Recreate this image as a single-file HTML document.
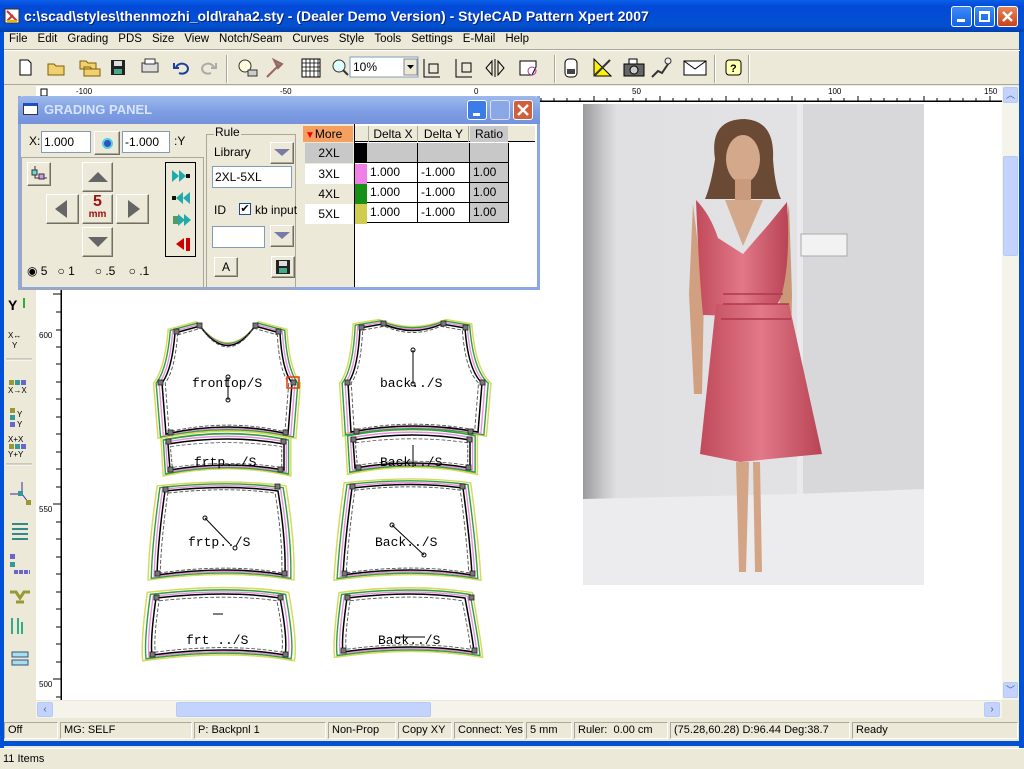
<!DOCTYPE html>
<html><head><meta charset="utf-8"><style>
*{box-sizing:border-box;margin:0;padding:0}
body{width:1024px;height:768px;overflow:hidden;background:#ECE9D8;font-family:Tahoma,"Liberation Sans",sans-serif;font-size:11px;position:relative;color:#000}
.abs{position:absolute}
#title{left:0;top:0;width:1024px;height:32px;background:linear-gradient(#0A5FE8,#0349D8 20%,#0350D0 80%,#0040B0);color:#fff;font-weight:bold;font-size:14px;line-height:32px;padding-left:24px;font-family:"Liberation Sans",sans-serif;text-shadow:1px 1px #0a1e7a}
.wb{position:absolute;top:6px;width:21px;height:21px;border:1px solid #fff;border-radius:3px;background:linear-gradient(#3C8CF8,#1560E8)}
#menu{left:4px;top:32px;width:1016px;height:16px;}
#menu span{margin:0 5px;font-size:11.5px;line-height:14px}
#tb{left:4px;top:50px;width:1016px;height:34px;border-top:1px solid #fff;}
.sep{position:absolute;top:4px;width:2px;height:28px;border-left:1px solid #aca899;border-right:1px solid #fff}
#lt{left:4px;top:86px;width:30px;height:632px;background:#ECE9D8}
#frameL{left:0;top:32px;width:4px;height:716px;background:#0050D8}
#frameR{left:1019px;top:32px;width:5px;height:716px;background:#0050D8}
#frameB{left:0;top:741px;width:1024px;height:5px;background:#0050D8}
#vr{left:36px;top:102px;width:26px;height:598px;background:#fff;border-right:1px solid #000}
#hr{left:36px;top:86px;width:966px;height:16px;background:#fff;border-bottom:1px solid #000}
#canvas{left:62px;top:102px;width:940px;height:598px;background:#fff}
#vs{left:1002px;top:86px;width:17px;height:614px;background:#F5F4EA}
#hs{left:36px;top:701px;width:966px;height:17px;background:#F5F4EA}
#status{left:4px;top:720px;width:1015px;height:20px;}
#status div{position:absolute;top:2px;height:17px;border:1px solid #aca899;border-color:#aca899 #fff #fff #aca899;font-size:11px;line-height:15px;padding-left:3px;font-family:"Liberation Sans Narrow","Liberation Sans",sans-serif}
#st2{left:0;top:748px;width:1024px;height:20px;font-size:11px;line-height:20px;padding-left:3px;border-top:1px solid #fff}
#gp{left:18px;top:96px;width:522px;height:194px;background:#ECE9D8;border:3px solid #8DA7E6;border-top:none}
#gpt{left:18px;top:96px;width:522px;height:28px;background:linear-gradient(#9DB9EB,#7C9CE4 60%,#7593DB);border-radius:6px 6px 0 0;color:#D8E4F8;font-weight:bold;font-size:13px;line-height:28px;padding-left:26px;font-family:"Liberation Sans",sans-serif}
.btn{position:absolute;background:#ECE9D8;border:1px solid;border-color:#fff #716F64 #716F64 #fff;box-shadow:inset -1px -1px #ACA899}
.inp{position:absolute;background:#fff;border:1px solid #7F9DB9;font-size:12px;line-height:20px;padding-left:2px}
.cell{position:absolute;height:20px;border-right:1px solid #000;border-bottom:1px solid #000;font-size:12px;line-height:18px;padding-left:3px}
</style></head><body>
<div id="title" class="abs">c:\scad\styles\thenmozhi_old\raha2.sty - (Dealer Demo Version) - StyleCAD Pattern Xpert 2007</div>
<svg class="abs" style="left:4px;top:8px" width="17" height="16"><rect x="1" y="1" width="14" height="14" fill="#fff" stroke="#333"/><path d="M3 3l10 10M3 13l6-6" stroke="#c33" stroke-width="2"/><path d="M3 13h10" stroke="#e8b800" stroke-width="2"/></svg>
<div class="wb" style="left:951px"><div style="position:absolute;left:5px;top:12px;width:8px;height:3px;background:#fff"></div></div>
<div class="wb" style="left:974px"><div style="position:absolute;left:4px;top:4px;width:11px;height:11px;border:2px solid #fff;border-top-width:3px"></div></div>
<div class="wb" style="left:997px;background:linear-gradient(#E8865C,#C8421A)"><svg width="19" height="19"><path d="M5 5l9 9M14 5l-9 9" stroke="#fff" stroke-width="2.4"/></svg></div>
<div id="frameL" class="abs"></div><div id="frameR" class="abs"></div><div id="frameB" class="abs"></div>
<div id="menu" class="abs"><span style="margin-left:5px">File</span><span>Edit</span><span>Grading</span><span>PDS</span><span>Size</span><span>View</span><span>Notch/Seam</span><span>Curves</span><span>Style</span><span>Tools</span><span>Settings</span><span>E-Mail</span><span>Help</span></div>
<div class="abs" style="left:4px;top:49px;width:1015px;height:1px;background:#aca899"></div>
<div id="tb" class="abs">
<svg width="760" height="34" style="position:absolute;left:0;top:0">
<path d="M16 9h8l3 3v12h-11z" fill="#fff" stroke="#000"/>
<path d="M44 13h6l2 2h8v9h-16z" fill="#F0D070" stroke="#806000"/>
<path d="M76 10h6l2 2h8v6h-16zM80 16h6l2 2h8v7h-16z" fill="#F0D070" stroke="#806000"/>
<rect x="107" y="9" width="14" height="15" fill="#222"/><rect x="110" y="10" width="8" height="5" fill="#ddd"/><rect x="110" y="18" width="8" height="5" fill="#4a8"/>
<rect x="138" y="12" width="16" height="9" fill="#ddd" stroke="#333"/><rect x="141" y="8" width="10" height="5" fill="#fff" stroke="#333"/>
<path d="M172 17a6 5 0 1 1 3 5M170 12v5h5" fill="none" stroke="#1A3FA0" stroke-width="2"/>
<path d="M210 17a6 5 0 1 0 -3 5M212 12v5h-5" fill="none" stroke="#aaa" stroke-width="2"/>
<circle cx="241" cy="15" r="6" fill="#ffd" stroke="#333"/><rect x="244" y="19" width="9" height="6" fill="#ccc" stroke="#333"/>
<path d="M263 26l12-12M270 9l8 4-4 4z" stroke="#966" stroke-width="2" fill="#888"/>
<rect x="298" y="8" width="18" height="18" fill="#fff" stroke="#000"/><path d="M298 12h18M298 16h18M298 20h18M302 8v18M306 8v18M310 8v18M314 8v18" stroke="#000" stroke-width="0.8"/>
<circle cx="335" cy="15" r="6" fill="#dff" stroke="#333"/><path d="M339 19l5 5" stroke="#333" stroke-width="2"/>
<rect x="346" y="6" width="68" height="20" fill="#fff" stroke="#7F9DB9"/><text x="349" y="20" font-size="12" font-family="Liberation Sans">10%</text>
<rect x="400" y="8" width="13" height="16" fill="#ECE9D8" stroke="#888"/><path d="M403 14h7l-3.5 4z" fill="#000"/>
<path d="M420 8v18h16M425 13h9v9h-9z" fill="none" stroke="#000"/>
<path d="M452 8v18h16M458 12h9v9h-9z" fill="none" stroke="#000"/>
<path d="M488 10l-6 7 6 7zM494 10l6 7-6 7zM491 8v18" fill="none" stroke="#000"/>
<path d="M516 10h16v6l-4 8h-12z" fill="#fff" stroke="#000"/><circle cx="528" cy="20" r="4" fill="none" stroke="#a3a"/>
<rect x="561" y="8" width="12" height="18" rx="4" fill="#fff" stroke="#000"/><rect x="563" y="18" width="8" height="5" fill="#444"/>
<path d="M590 8l17 17h-17z" fill="#FFF200" stroke="#000"/><path d="M590 25l16-16" stroke="#333" stroke-width="2"/>
<rect x="620" y="13" width="20" height="12" fill="#666" stroke="#000"/><circle cx="630" cy="19" r="4" fill="#ccc" stroke="#000"/><rect x="625" y="8" width="8" height="5" fill="#fff" stroke="#000"/>
<path d="M648 26l6-6 4 2 8-12" stroke="#333" stroke-width="2" fill="none"/><circle cx="664" cy="10" r="3" fill="#eee" stroke="#333"/>
<rect x="680" y="10" width="22" height="14" fill="#fff" stroke="#000"/><path d="M680 10l11 8 11-8" fill="none" stroke="#000"/>
<rect x="722" y="9" width="15" height="15" rx="3" fill="#FFFFB0" stroke="#000"/><text x="726" y="21" font-size="11" font-weight="bold" font-family="Liberation Sans">?</text>
</svg>
<div class="sep" style="left:222px"></div><div class="sep" style="left:550px"></div><div class="sep" style="left:710px"></div><div class="sep" style="left:744px"></div>
</div>
<div class="abs" style="left:4px;top:84px;width:1015px;height:1px;background:#aca899"></div>
<div id="lt" class="abs">
<svg width="30" height="630"><g transform="translate(0,38)">
<g font-family="Liberation Sans" font-size="8" fill="#000">
<text x="4" y="186" font-size="14" font-weight="bold">Y</text><path d="M20 174v10" stroke="#3a3" stroke-width="2"/>
<text x="4" y="214">X↔</text><text x="8" y="224">Y</text>
<rect x="5" y="256" width="5" height="5" fill="#993"/><rect x="11" y="256" width="5" height="5" fill="#399"/><rect x="17" y="256" width="5" height="5" fill="#66c"/><text x="4" y="269">X→X</text>
<rect x="6" y="284" width="5" height="5" fill="#993"/><rect x="6" y="291" width="5" height="5" fill="#399"/><rect x="6" y="298" width="5" height="5" fill="#66c"/><text x="13" y="293">Y</text><text x="13" y="303">Y</text>
<text x="4" y="318">X+X</text><rect x="5" y="320" width="5" height="5" fill="#993"/><rect x="11" y="320" width="5" height="5" fill="#399"/><rect x="17" y="320" width="5" height="5" fill="#66c"/><text x="4" y="333">Y+Y</text>
<path d="M6 370h12v-12M18 370l6 8" stroke="#339" fill="none"/><rect x="14" y="367" width="5" height="5" fill="#399"/><rect x="22" y="376" width="5" height="5" fill="#993"/>
<path d="M8 400h16M8 405h16M8 410h16M8 415h16" stroke="#388" stroke-width="2"/>
<rect x="6" y="430" width="5" height="5" fill="#66c"/><rect x="6" y="438" width="5" height="5" fill="#399"/><path d="M10 448h16" stroke="#66c" stroke-width="4" stroke-dasharray="4 1"/>
<path d="M6 468h6l4 6 4-6h6M12 478h8" stroke="#993" stroke-width="3" fill="none"/>
<path d="M8 494v16M14 494v16M18 498v12" stroke="#3a8" stroke-width="2"/>
<path d="M8 528h16v5h-16zM8 536h16v5h-16z" fill="#ade" stroke="#357"/>
</g>
<path d="M2 235h26M2 340h26" stroke="#aca899"/>
<path d="M2 236h26M2 341h26" stroke="#fff"/>
</g></svg>
</div>
<div id="hr" class="abs"><svg width="966" height="16">
<path d="M0 15h966" stroke="#000"/>
<path d="M30 15v-5M43 15v-3M56 15v-3M69 15v-3M83 15v-3M96 15v-5M109 15v-3M122 15v-3M135 15v-3M148 15v-3M162 15v-5M175 15v-3M188 15v-3M201 15v-3M214 15v-3M228 15v-5M241 15v-3M254 15v-3M267 15v-3M280 15v-3M294 15v-5M307 15v-3M320 15v-3M333 15v-3M346 15v-3M360 15v-5M373 15v-3M386 15v-3M399 15v-3M412 15v-3M426 15v-5M439 15v-3M452 15v-3M465 15v-3M478 15v-3M492 15v-5M505 15v-3M518 15v-3M531 15v-3M544 15v-3M558 15v-5M571 15v-3M584 15v-3M597 15v-3M610 15v-3M624 15v-5M637 15v-3M650 15v-3M663 15v-3M676 15v-3M690 15v-5M703 15v-3M716 15v-3M729 15v-3M742 15v-3M756 15v-5M769 15v-3M782 15v-3M795 15v-3M808 15v-3M822 15v-5M835 15v-3M848 15v-3M861 15v-3M874 15v-3M888 15v-5M901 15v-3M914 15v-3M927 15v-3M940 15v-3M954 15v-5" stroke="#000"/>
<g font-size="8" font-family="Liberation Sans"><text x="40" y="8">-100</text><text x="244" y="8">-50</text><text x="438" y="8">0</text><text x="596" y="8">50</text><text x="792" y="8">100</text><text x="948" y="8">150</text></g>
</svg></div>
<svg class="abs" style="left:38px;top:86px" width="20" height="15"><rect x="3" y="3" width="6" height="7" fill="none" stroke="#000"/><path d="M3 12h14" stroke="#000" stroke-width="2"/></svg>
<div id="vr" class="abs"><svg width="26" height="598">
<path d="M25 0v598" stroke="#000"/>
<path d="M25 17h-8M25 35h-5M25 52h-5M25 70h-5M25 87h-5M25 105h-5M25 122h-5M25 140h-5M25 157h-5M25 175h-5M25 192h-8M25 210h-5M25 228h-5M25 245h-5M25 262h-5M25 280h-5M25 297h-5M25 315h-5M25 332h-5M25 350h-5M25 367h-5M25 385h-5M25 402h-8M25 420h-5M25 437h-5M25 455h-5M25 472h-5M25 490h-5M25 507h-5M25 525h-5M25 542h-5M25 560h-5M25 577h-8M25 595h-5" stroke="#000"/>
<g font-size="8" font-family="Liberation Sans"><text x="3" y="236">600</text><text x="3" y="410">550</text><text x="3" y="585">500</text></g>
</svg></div>
<div id="canvas" class="abs"></div>
<!-- photo -->
<svg class="abs" style="left:583px;top:104px" width="341" height="481">
<defs>
<linearGradient id="wl" x1="0" x2="1"><stop offset="0" stop-color="#9a9a9c"/><stop offset="0.06" stop-color="#c8c8ca"/><stop offset="0.1" stop-color="#e0e0e2"/><stop offset="1" stop-color="#e4e4e6"/></linearGradient>
<linearGradient id="dr" x1="0" x2="1"><stop offset="0" stop-color="#c04a5a"/><stop offset="0.5" stop-color="#e27888"/><stop offset="1" stop-color="#b84455"/></linearGradient>
</defs>
<rect width="341" height="481" fill="url(#wl)"/>
<rect x="214" y="0" width="127" height="390" fill="#d8d8da"/>
<rect x="214" y="0" width="6" height="390" fill="#eaeaec"/>
<path d="M0 395L214 390L341 385V481H0z" fill="#ececee"/>
<rect x="218" y="130" width="46" height="22" fill="#f2f2f2" stroke="#aaa"/>
<path d="M132 55q-6-40 30-40q30 2 28 40q2 28 8 40h-76q6-14 10-40z" fill="#6a4a34"/>
<ellipse cx="160" cy="55" rx="17" ry="24" fill="#d4a88a"/>
<rect x="152" y="75" width="16" height="22" fill="#c99a7c"/>
<path d="M110 100l-4 90 5 100h8l2-100z" fill="#d0a080"/>
<path d="M206 100l3 90-2 95h-7l-4-100z" fill="#c89878"/>
<path d="M113 96q14 14 22 38l25 16 26-30 18-22q4 60-6 95l-10 20l-68-2q-4-40-7-115z" fill="url(#dr)"/>
<path d="M142 96l18 46 20-46" fill="#d4a88a"/>
<path d="M133 200l-16 150 40 8 40-4 42-4-33-150z" fill="url(#dr)"/>
<path d="M153 358l3 110h7l3-110zM170 358l2 110h7l-2-110z" fill="#d4a486"/>
<path d="M140 200h66M138 215h70M140 190h60" stroke="#b03848" stroke-width="1.5"/>
</svg>
<!-- patterns -->
<svg class="abs" style="left:0;top:0" width="1000" height="700">
<defs>
<path id="a1" d="M175 333L200 326Q228 365 255 326L280 333Q282 370 292 383L288 434Q228 420 166 434L162 383Q172 370 175 333Z"/>
<path id="a2" d="M168 444Q228 434 284 444L284 470Q228 460 170 470Z"/>
<path id="a3" d="M165 491Q228 484 278 491Q286 540 285 575Q228 565 157 575Q158 540 165 491Z"/>
<path id="a4" d="M156 598Q228 590 280 598Q288 640 285 655Q228 645 152 655Q150 640 156 598Z"/>
<path id="b1" d="M360 328L383 324Q413 337 442 324L465 328Q468 370 482 383L478 432Q413 420 351 432L348 383Q358 370 360 328Z"/>
<path id="b2" d="M353 440Q413 430 470 440L470 468Q413 458 355 468Z"/>
<path id="b3" d="M352 488Q413 481 463 488Q470 540 472 575Q413 565 343 575Q345 540 352 488Z"/>
<path id="b4" d="M347 598Q413 590 465 598Q473 640 474 652Q413 642 343 652Q341 640 347 598Z"/>
</defs>
<g fill="none" stroke-width="1.3">
<g stroke="#d8d860"><use href="#a1" transform="translate(227,380) scale(1.13,1.08) translate(-227,-380)"/><use href="#a2" transform="translate(227,457) scale(1.12,1.45) translate(-227,-457)"/><use href="#a3" transform="translate(221,533) scale(1.14,1.12) translate(-221,-533)"/><use href="#a4" transform="translate(218,626) scale(1.14,1.2) translate(-218,-626)"/>
<use href="#b1" transform="translate(413,380) scale(1.13,1.08) translate(-413,-380)"/><use href="#b2" transform="translate(413,454) scale(1.13,1.45) translate(-413,-454)"/><use href="#b3" transform="translate(408,531) scale(1.14,1.12) translate(-408,-531)"/><use href="#b4" transform="translate(408,625) scale(1.13,1.2) translate(-408,-625)"/></g>
<g stroke="#30a040"><use href="#a1" transform="translate(227,380) scale(1.09,1.055) translate(-227,-380)"/><use href="#a2" transform="translate(227,457) scale(1.08,1.3) translate(-227,-457)"/><use href="#a3" transform="translate(221,533) scale(1.09,1.08) translate(-221,-533)"/><use href="#a4" transform="translate(218,626) scale(1.09,1.13) translate(-218,-626)"/>
<use href="#b1" transform="translate(413,380) scale(1.09,1.055) translate(-413,-380)"/><use href="#b2" transform="translate(413,454) scale(1.09,1.3) translate(-413,-454)"/><use href="#b3" transform="translate(408,531) scale(1.09,1.08) translate(-408,-531)"/><use href="#b4" transform="translate(408,625) scale(1.09,1.13) translate(-408,-625)"/></g>
<g stroke="#e890e0"><use href="#a1" transform="translate(227,380) scale(1.045,1.028) translate(-227,-380)"/><use href="#a2" transform="translate(227,457) scale(1.04,1.15) translate(-227,-457)"/><use href="#a3" transform="translate(221,533) scale(1.045,1.04) translate(-221,-533)"/><use href="#a4" transform="translate(218,626) scale(1.045,1.065) translate(-218,-626)"/>
<use href="#b1" transform="translate(413,380) scale(1.045,1.028) translate(-413,-380)"/><use href="#b2" transform="translate(413,454) scale(1.045,1.15) translate(-413,-454)"/><use href="#b3" transform="translate(408,531) scale(1.045,1.04) translate(-408,-531)"/><use href="#b4" transform="translate(408,625) scale(1.045,1.065) translate(-408,-625)"/></g>
<g stroke="#000" stroke-width="1.5"><use href="#a1"/><use href="#a2"/><use href="#a3"/><use href="#a4"/><use href="#b1"/><use href="#b2"/><use href="#b3"/><use href="#b4"/></g>
<g stroke="#555" stroke-width="1" stroke-dasharray="4 2"><use href="#a1" transform="translate(227,380) scale(0.95,0.96) translate(-227,-380)"/><use href="#a2" transform="translate(227,457) scale(0.96,0.8) translate(-227,-457)"/><use href="#a3" transform="translate(221,533) scale(0.95,0.95) translate(-221,-533)"/><use href="#a4" transform="translate(218,626) scale(0.95,0.9) translate(-218,-626)"/>
<use href="#b1" transform="translate(413,380) scale(0.95,0.96) translate(-413,-380)"/><use href="#b2" transform="translate(413,454) scale(0.96,0.8) translate(-413,-454)"/><use href="#b3" transform="translate(408,531) scale(0.95,0.95) translate(-408,-531)"/><use href="#b4" transform="translate(408,625) scale(0.95,0.9) translate(-408,-625)"/></g>
</g>
<g fill="#777" stroke="#222" stroke-width="0.8">
<rect x="174" y="329" width="5" height="5"/><rect x="197" y="323" width="5" height="5"/><rect x="253" y="323" width="5" height="5"/><rect x="276" y="329" width="5" height="5"/><rect x="158" y="380" width="5" height="5"/><rect x="291" y="380" width="5" height="5"/><rect x="168" y="430" width="5" height="5"/><rect x="283" y="430" width="5" height="5"/>
<rect x="166" y="439" width="5" height="5"/><rect x="281" y="439" width="5" height="5"/><rect x="168" y="467" width="5" height="5"/><rect x="278" y="467" width="5" height="5"/>
<rect x="163" y="487" width="5" height="5"/><rect x="275" y="484" width="5" height="5"/><rect x="155" y="571" width="5" height="5"/><rect x="282" y="571" width="5" height="5"/>
<rect x="154" y="595" width="5" height="5"/><rect x="278" y="595" width="5" height="5"/><rect x="150" y="652" width="5" height="5"/><rect x="283" y="652" width="5" height="5"/>
<rect x="359" y="325" width="5" height="5"/><rect x="381" y="321" width="5" height="5"/><rect x="441" y="321" width="5" height="5"/><rect x="463" y="325" width="5" height="5"/><rect x="345" y="380" width="5" height="5"/><rect x="480" y="380" width="5" height="5"/><rect x="354" y="429" width="5" height="5"/><rect x="468" y="429" width="5" height="5"/>
<rect x="351" y="437" width="5" height="5"/><rect x="467" y="437" width="5" height="5"/><rect x="356" y="465" width="5" height="5"/><rect x="466" y="465" width="5" height="5"/>
<rect x="350" y="484" width="5" height="5"/><rect x="460" y="484" width="5" height="5"/><rect x="342" y="571" width="5" height="5"/><rect x="470" y="571" width="5" height="5"/>
<rect x="345" y="595" width="5" height="5"/><rect x="469" y="595" width="5" height="5"/><rect x="341" y="648" width="5" height="5"/><rect x="472" y="648" width="5" height="5"/>
</g>
<rect x="287" y="377" width="12" height="11" fill="none" stroke="#e04010" stroke-width="1.5"/>
<g stroke="#000" fill="none"><path d="M228 377v23M413 350v34M413 445v22M205 518l25 26M392 525l32 30M395 637h30M213 614h10"/>
<circle cx="228" cy="377" r="2"/><circle cx="228" cy="400" r="2"/><circle cx="413" cy="350" r="2"/><circle cx="413" cy="384" r="2"/><circle cx="205" cy="518" r="2"/><circle cx="235" cy="548" r="2"/><circle cx="392" cy="525" r="2"/><circle cx="424" cy="555" r="2"/></g>
<g font-family="Liberation Mono" font-size="13" fill="#000">
<text x="192" y="387">frontop/S</text><text x="194" y="466">frtp../S</text><text x="188" y="546">frtp../S</text><text x="186" y="644">frt ../S</text>
<text x="380" y="387">back../S</text><text x="380" y="466">Back../S</text><text x="375" y="546">Back../S</text><text x="378" y="644">Back../S</text>
</g>
</svg>
<!-- scrollbars -->
<div id="vs" class="abs">
<div style="position:absolute;left:1px;top:1px;width:15px;height:16px;background:#C3D3FD;border:1px solid #B7CAF5;border-radius:2px;font-size:9px;text-align:center;color:#4D6185">︿</div>
<div style="position:absolute;left:1px;top:70px;width:15px;height:100px;background:#C3D3FD;border:1px solid #B7CAF5;border-radius:2px"></div>
<div style="position:absolute;left:1px;top:596px;width:15px;height:16px;background:#C3D3FD;border:1px solid #B7CAF5;border-radius:2px;font-size:9px;text-align:center;color:#4D6185">﹀</div>
</div>
<div id="hs" class="abs">
<div style="position:absolute;left:1px;top:1px;width:16px;height:15px;background:#C3D3FD;border:1px solid #B7CAF5;border-radius:2px;font-size:10px;line-height:13px;text-align:center;color:#4D6185">‹</div>
<div style="position:absolute;left:140px;top:1px;width:255px;height:15px;background:#C3D3FD;border:1px solid #B7CAF5;border-radius:2px"></div>
<div style="position:absolute;left:948px;top:1px;width:16px;height:15px;background:#C3D3FD;border:1px solid #B7CAF5;border-radius:2px;font-size:10px;line-height:13px;text-align:center;color:#4D6185">›</div>
</div>
<div id="status" class="abs">
<div style="left:0;width:54px">Off</div><div style="left:56px;width:132px">MG: SELF</div><div style="left:190px;width:132px">P: Backpnl 1</div><div style="left:324px;width:68px">Non-Prop</div><div style="left:394px;width:54px">Copy XY</div><div style="left:450px;width:70px">Connect: Yes</div><div style="left:522px;width:46px">5 mm</div><div style="left:570px;width:94px">Ruler:&nbsp; 0.00 cm</div><div style="left:666px;width:180px">(75.28,60.28) D:96.44 Deg:38.7</div><div style="left:848px;width:166px">Ready</div>
</div>
<div id="st2" class="abs">11 Items</div>
<!-- grading panel -->
<div id="gp" class="abs"></div>
<div id="gpt" class="abs">GRADING PANEL</div>
<div class="abs" style="left:23px;top:103px;width:15px;height:12px;background:#fff;border:1px solid #335;border-top:3px solid #2050c0"></div>
<div class="abs" style="left:467px;top:100px;width:20px;height:20px;border:1px solid #fff;border-radius:3px;background:#3C7CE8"><div style="position:absolute;left:5px;top:12px;width:7px;height:3px;background:#fff"></div></div>
<div class="abs" style="left:490px;top:100px;width:20px;height:20px;border:1px solid #dde;border-radius:3px;background:#8AA8E8"></div>
<div class="abs" style="left:513px;top:100px;width:20px;height:20px;border:1px solid #fff;border-radius:3px;background:#D0603C"><svg width="18" height="18"><path d="M4 4l10 10M14 4l-10 10" stroke="#fff" stroke-width="2.4"/></svg></div>
<div class="abs" style="left:21px;top:124px;width:516px;height:163px;font-size:12px">
<span class="abs" style="left:8px;top:10px">X:</span><div class="inp" style="left:20px;top:7px;width:50px;height:22px">1.000</div>
<div class="btn" style="left:73px;top:7px;width:26px;height:24px"><div style="margin:6px 0 0 7px;width:11px;height:11px;border-radius:50%;background:#3050c0;border:2px solid #50d0e0"></div></div>
<div class="inp" style="left:101px;top:7px;width:48px;height:22px">-1.000</div><span class="abs" style="left:153px;top:10px">:Y</span>
<div class="abs" style="left:0;top:33px;width:183px;height:132px;border:1px solid #aca899"></div>
<div class="btn" style="left:6px;top:38px;width:24px;height:24px"></div>
<svg class="abs" style="left:8px;top:40px" width="20" height="20"><path d="M6 2v12h12" stroke="#333" fill="none"/><rect x="3" y="6" width="5" height="5" fill="#6dd" stroke="#333"/><rect x="10" y="10" width="5" height="5" fill="#c9e" stroke="#333"/></svg>
<div class="btn" style="left:61px;top:38px;width:31px;height:30px"><svg width="29" height="28"><path d="M5 19l10-10 10 10z" fill="#666"/></svg></div>
<div class="btn" style="left:25px;top:70px;width:33px;height:30px"><svg width="31" height="28"><path d="M20 5v18l-12-9z" fill="#666"/></svg></div>
<div class="btn" style="left:61px;top:70px;width:31px;height:30px;color:#a01010;font-weight:bold;text-align:center;line-height:13px"><div style="font-size:16px">5</div><div style="font-size:10px">mm</div></div>
<div class="btn" style="left:95px;top:70px;width:33px;height:30px"><svg width="31" height="28"><path d="M11 5v18l12-9z" fill="#666"/></svg></div>
<div class="btn" style="left:61px;top:103px;width:31px;height:30px"><svg width="29" height="28"><path d="M5 9l10 10 10-10z" fill="#666"/></svg></div>
<div class="abs" style="left:144px;top:38px;width:31px;height:95px;border:1px solid #000"></div>
<svg class="abs" style="left:149px;top:42px" width="22" height="88"><path d="M2 4l7 6-7 6zM9 4l7 6-7 6z" fill="#2aa"/><rect x="16" y="8" width="4" height="4" fill="#111"/><path d="M20 26l-7 6 7 6zM13 26l-7 6 7 6z" fill="#2aa"/><rect x="2" y="30" width="4" height="4" fill="#111"/><path d="M8 48l7 6-7 6zM14 48l7 6-7 6z" fill="#2aa"/><rect x="3" y="50" width="5" height="8" fill="#596"/><path d="M14 72l-8 6 8 6z" fill="#c00"/><rect x="16" y="72" width="4" height="13" fill="#c00"/></svg>
<span class="abs" style="left:6px;top:140px">◉ 5&nbsp;&nbsp;&nbsp;○ 1&nbsp;&nbsp;&nbsp;&nbsp;&nbsp;&nbsp;○ .5&nbsp;&nbsp;&nbsp;&nbsp;○ .1</span>
<div class="abs" style="left:185px;top:10px;width:90px;height:155px;border:1px solid #aca899"></div>
<span class="abs" style="left:193px;top:1px;background:#ECE9D8;padding:0 1px">Rule</span>
<span class="abs" style="left:193px;top:21px">Library</span>
<div class="btn" style="left:249px;top:18px;width:24px;height:22px"><svg width="22" height="20"><path d="M3 6h16l-8 7z" fill="#7a7aa8"/></svg></div>
<div class="inp" style="left:191px;top:42px;width:80px;height:22px">2XL-5XL</div>
<span class="abs" style="left:193px;top:79px">ID</span>
<div class="abs" style="left:218px;top:79px;width:12px;height:12px;background:#fff;border:1px solid #1c5180;font-size:11px;line-height:10px;text-align:center">✔</div>
<span class="abs" style="left:234px;top:79px">kb input</span>
<div class="inp" style="left:191px;top:102px;width:53px;height:22px"></div>
<div class="btn" style="left:249px;top:101px;width:24px;height:22px"><svg width="22" height="20"><path d="M3 6h16l-8 7z" fill="#7a7aa8"/></svg></div>
<div class="btn" style="left:193px;top:133px;width:24px;height:20px;text-align:center;line-height:18px">A</div>
<div class="btn" style="left:250px;top:132px;width:24px;height:22px"><svg width="22" height="20"><rect x="4" y="3" width="14" height="14" fill="#222"/><rect x="7" y="4" width="8" height="5" fill="#ddd"/><rect x="7" y="11" width="8" height="5" fill="#4a8"/></svg></div>
<div class="abs" style="left:282px;top:0;width:234px;height:163px;background:#fff"></div>
<div class="abs" style="left:282px;top:0;width:52px;height:163px;background:#ECE9D8;border-right:1px solid #000"></div>
<div class="abs" style="left:282px;top:2px;width:50px;height:16px;background:#F5A060;font-size:12px;line-height:16px;padding-left:2px"><span style="color:#e00;font-size:10px">▼</span>More</div>
<div class="abs" style="left:334px;top:2px;width:180px;height:16px;background:#ECE9D8;border-bottom:1px solid #000"></div>
<div class="abs" style="left:347px;top:2px;width:50px;height:16px;border-left:1px solid #aca899;border-right:1px solid #aca899;text-align:center;line-height:16px">Delta X</div>
<div class="abs" style="left:398px;top:2px;width:50px;height:16px;text-align:center;line-height:16px;border-right:1px solid #aca899">Delta Y</div>
<div class="abs" style="left:449px;top:2px;width:38px;height:16px;background:#C8C8C8;text-align:center;line-height:16px">Ratio</div>
<div class="abs" style="left:284px;top:19px;width:48px;height:20px;background:#C8C8C8;text-align:center;line-height:20px">2XL</div>
<div class="abs" style="left:284px;top:40px;width:48px;height:20px;text-align:center;line-height:20px;background:#fff">3XL</div>
<div class="abs" style="left:284px;top:60px;width:48px;height:20px;text-align:center;line-height:20px">4XL</div>
<div class="abs" style="left:284px;top:80px;width:48px;height:20px;text-align:center;line-height:20px;background:#fff">5XL</div>
<div class="abs" style="left:334px;top:19px;width:12px;height:20px;background:#000"></div>
<div class="abs" style="left:334px;top:40px;width:12px;height:20px;background:#F080E8"></div>
<div class="abs" style="left:334px;top:60px;width:12px;height:20px;background:#189018"></div>
<div class="abs" style="left:334px;top:80px;width:12px;height:20px;background:#D0CC50"></div>
<div class="cell" style="left:346px;top:19px;width:51px;background:#C8C8C8"></div><div class="cell" style="left:397px;top:19px;width:52px;background:#C8C8C8"></div><div class="cell" style="left:449px;top:19px;width:39px;background:#C8C8C8"></div>
<div class="cell" style="left:346px;top:39px;width:51px">1.000</div><div class="cell" style="left:397px;top:39px;width:52px">-1.000</div><div class="cell" style="left:449px;top:39px;width:39px;background:#C8C8C8">1.00</div>
<div class="cell" style="left:346px;top:59px;width:51px">1.000</div><div class="cell" style="left:397px;top:59px;width:52px">-1.000</div><div class="cell" style="left:449px;top:59px;width:39px;background:#C8C8C8">1.00</div>
<div class="cell" style="left:346px;top:79px;width:51px">1.000</div><div class="cell" style="left:397px;top:79px;width:52px">-1.000</div><div class="cell" style="left:449px;top:79px;width:39px;background:#C8C8C8">1.00</div>
</div>
</body></html>
